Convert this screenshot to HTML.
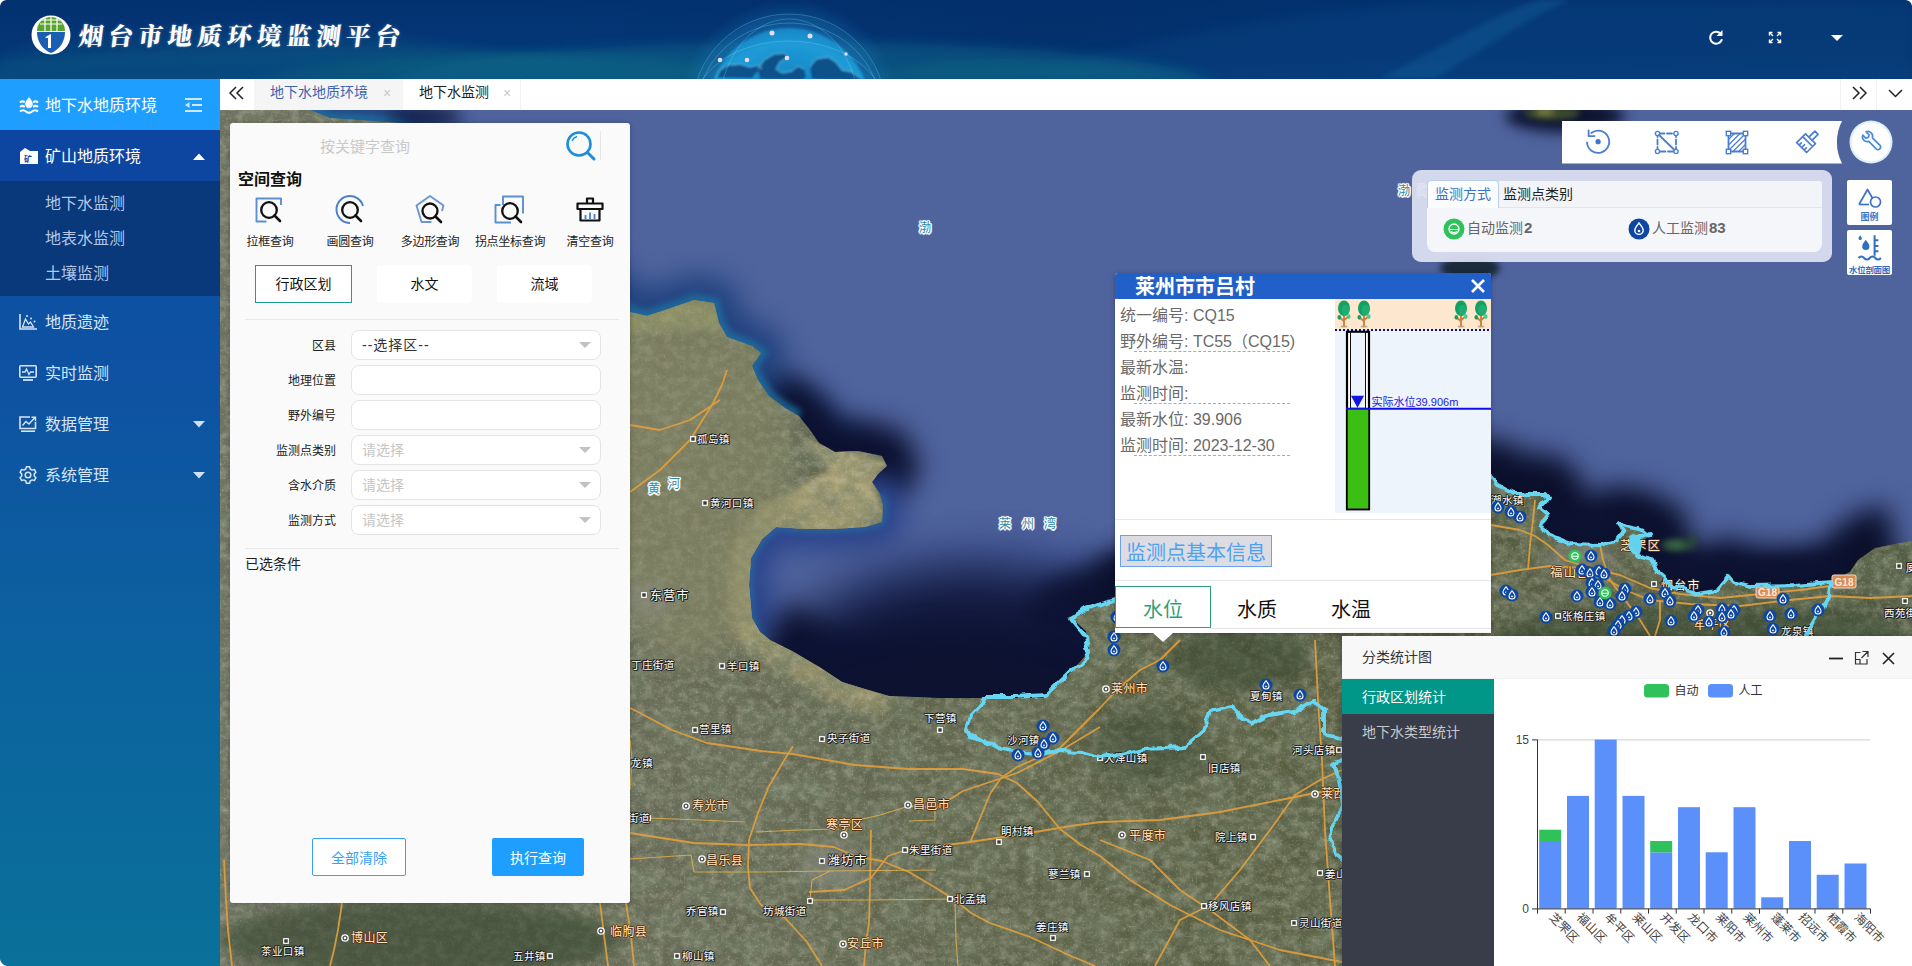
<!DOCTYPE html>
<html lang="zh-CN">
<head>
<meta charset="utf-8">
<title>烟台市地质环境监测平台</title>
<style>
*{box-sizing:border-box;margin:0;padding:0}
html,body{width:1912px;height:966px;overflow:hidden;background:#0a5a9c;}
body{font-family:"Liberation Sans","Noto Sans CJK SC",sans-serif;font-size:14px;color:#333;position:relative}
.abs{position:absolute}
#header{position:absolute;left:0;top:0;width:1912px;height:79px;overflow:hidden;background:#04377a}
#header svg{position:absolute;left:0;top:0}
#title{position:absolute;left:79px;top:9px;font-family:"Noto Serif CJK SC","Liberation Serif",serif;font-weight:900;font-size:24.500px;letter-spacing:5.200px;color:#fff;text-shadow:0 0 3px rgba(255,255,255,.3);white-space:nowrap;line-height:52px;transform:skewX(-7deg);transform-origin:0 50%}
#side{position:absolute;left:0;top:79px;width:220px;height:887px;background:linear-gradient(180deg,#0d4ea3 0%,#0e52a2 35%,#0c629f 65%,#0a7199 100%)}
.mi{position:absolute;left:0;width:220px;color:#e6eefb;font-size:16px;white-space:nowrap}
.mi span{position:absolute;left:45px;top:1px}
.mi svg{position:absolute}
#tabs{position:absolute;left:220px;top:79px;width:1692px;height:31px;background:#fff}
#tabs .t{position:absolute;top:0;height:31px;line-height:26px;font-size:14px;white-space:nowrap}
#map{position:absolute;left:220px;top:110px;width:1692px;height:856px;overflow:hidden;background:#4f639d}
#panel{position:absolute;left:230px;top:123px;width:400px;height:780px;background:#fafafa;border-radius:3px;box-shadow:0 0 4px rgba(0,0,0,.25)}
.lbl{position:absolute;font-size:12px;margin-top:1px;color:#222;white-space:nowrap;text-align:right}
.inp{position:absolute;left:121px;width:250px;height:30px;border:1px solid #e4e4e4;border-radius:8px;background:#fff;font-size:14px;line-height:28px;padding-left:10px;color:#c6c6c6;white-space:nowrap}
.inp i{position:absolute;right:9px;top:11px;width:0;height:0;border:6px solid transparent;border-top:6px solid #c2c2c2;border-bottom:0}
.ic{position:absolute;font-size:12px;color:#222;text-align:center;white-space:nowrap;letter-spacing:-0.3px}
.cl{position:absolute;color:#fff;font-size:10.5px;white-space:nowrap;text-shadow:-1px 0 #222,1px 0 #222,0 -1px #222,0 1px #222,1px 1px #222,-1px -1px #222;letter-spacing:.4px;line-height:14px}
.cl.o{color:#fde6c8;text-shadow:-1px 0 #5e3008,1px 0 #5e3008,0 -1px #5e3008,0 1px #5e3008;font-size:12px}
.cl.w{color:#2f8aa6;text-shadow:-1.500px 0 #fff,1.500px 0 #fff,0 -1.500px #fff,0 1.500px #fff,1px 1px #fff,-1px -1px #fff,1px -1px #fff,-1px 1px #fff,0 0 3px #fff;font-size:12px;letter-spacing:0}
</style>
</head>
<body>
<div id="header">
<svg width="1912" height="79" viewBox="0 0 1912 79">
<defs>
<linearGradient id="hg" x1="0" x2="1" y1="0" y2="0"><stop offset="0" stop-color="#043576"/><stop offset=".3" stop-color="#043676"/><stop offset=".55" stop-color="#03316c"/><stop offset=".75" stop-color="#033572"/><stop offset="1" stop-color="#033670"/></linearGradient>
<radialGradient id="gl" cx=".5" cy=".62" r=".62"><stop offset="0" stop-color="#1684c6"/><stop offset=".6" stop-color="#1a94d4"/><stop offset=".85" stop-color="#22a8e4"/><stop offset="1" stop-color="#1a90d0"/></radialGradient><linearGradient id="hv" x1="0" x2="0" y1="0" y2="1"><stop offset="0" stop-color="#022c68" stop-opacity=".4"/><stop offset=".5" stop-color="#022c68" stop-opacity="0"/><stop offset="1" stop-color="#0a4a8a" stop-opacity=".35"/></linearGradient>
<radialGradient id="gh" cx=".5" cy=".5" r=".5"><stop offset=".7" stop-color="#1a86c8" stop-opacity=".45"/><stop offset="1" stop-color="#1a86c8" stop-opacity="0"/></radialGradient><filter id="b1"><feGaussianBlur stdDeviation="1"/></filter><filter id="b05"><feGaussianBlur stdDeviation=".5"/></filter><filter id="b6"><feGaussianBlur stdDeviation="6"/></filter>
<filter id="b3"><feGaussianBlur stdDeviation="2.5"/></filter>
</defs>
<rect width="1912" height="79" fill="url(#hg)"/>
<rect width="1912" height="79" fill="url(#hv)"/>
<ellipse cx="330" cy="88" rx="420" ry="42" fill="#0c6688" opacity=".32" filter="url(#b6)"/>
<path d="M250 78 C400 52 560 50 700 62 C740 66 770 72 800 78Z" fill="#128078" opacity=".3" filter="url(#b6)"/>
<path d="M0 52 C150 20 300 22 420 40 C500 52 560 62 640 66 C500 70 300 60 0 70Z" fill="#157a90" opacity=".12" filter="url(#b6)"/>
<path d="M1380 78 C1440 50 1480 20 1540 0 L1570 0 C1515 25 1475 55 1436 78Z" fill="#1a7ab0" opacity=".3" filter="url(#b3)"/>
<path d="M1020 79 C1100 50 1200 30 1300 15 C1400 2 1500 0 1560 0 L1912 0 L1912 79Z" fill="#0a4a8c" opacity=".28" filter="url(#b6)"/><path d="M860 79 C920 58 1040 52 1200 79Z" fill="#128078" opacity=".4" filter="url(#b6)"/>
<ellipse cx="800" cy="90" rx="420" ry="48" fill="#0d6088" opacity=".6" filter="url(#b6)"/><circle cx="789" cy="112" r="112" fill="url(#gh)"/>
<g filter="url(#b1)" opacity=".82">
<circle cx="789" cy="111" r="97" fill="#1a78b8" opacity=".22"/>
<circle cx="789" cy="109" r="81" fill="url(#gl)"/>
<path d="M716 78 l4 -8 l8 -5 l12 -1 l10 3 l8 -2 l4 4 l-6 4 l-4 5z M760 79 l-2 -10 l6 -9 l10 -6 l10 -1 l4 4 l-8 5 l-4 7 l6 4 l10 -2 l6 -5 l6 3 l2 8 l-4 3z M812 79 l-2 -12 l6 -8 l12 -2 l8 5 l6 8 l10 2 l8 6 l2 3z" fill="#0a4078" opacity=".85"/>
<path d="M716 78 l4 -8 l8 -5 l12 -1 l10 3 l8 -2 l4 4 M758 69 l6 -9 l10 -6 l10 -1 l4 4 l-8 5 l-4 7 l6 4 l10 -2 l6 -5 l6 3 M810 67 l6 -8 l12 -2 l8 5 l6 8 l10 2 l8 6" fill="none" stroke="#7fe8ff" stroke-width=".9" opacity=".8"/>
</g>
<g fill="none" stroke="#8fe6ff" stroke-opacity=".32" stroke-width=".8">
<circle cx="789" cy="111" r="97"/><ellipse cx="789" cy="111" rx="92" ry="88"/><ellipse cx="789" cy="111" rx="97" ry="70"/><ellipse cx="789" cy="111" rx="70" ry="92"/>
</g>
<g fill="#eadcff" filter="url(#b05)"><circle cx="772" cy="33" r="2.500"/><circle cx="810" cy="36" r="2.500"/><circle cx="720" cy="60" r="2.300"/><circle cx="747" cy="60" r="2.300"/><circle cx="787" cy="58" r="2.300"/><circle cx="846" cy="54" r="1.700"/></g>
<!-- logo -->
<circle cx="51" cy="35" r="19.5" fill="#fff"/>
<path d="M37 31 a14 14 0 0 1 28 0z" fill="#5aa52e"/>
<path d="M37 32 h28 c0 10 -6 18 -14 21 c-8 -3 -14 -11 -14 -21z" fill="#1b5fb4"/>
<path d="M40 24 h22 M42 20 h18 M45 17 v14 M51 16 v15 M57 17 v14" stroke="#fff" stroke-width="1.2" fill="none"/>
<path d="M47 36 l4 -2 v14 h-3 v-10 h-3z" fill="#fff"/>
<!-- right icons -->
<g fill="none" stroke="#fff" stroke-width="2" stroke-linecap="round"><path d="M1720.5 33.5 a6 6 0 1 0 1.2 6.5"/></g>
<path d="M1722.5 30 v6 h-6z" fill="#fff"/>
<g stroke="#fff" stroke-width="1.4" fill="none"><path d="M1769.5 32.5 l3.5 3.5 M1780.500 32.5 l-3.500 3.500 M1769.500 42.500 l3.500 -3.500 M1780.500 42.500 l-3.500 -3.500"/><path d="M1769.500 35.500 v-3 h3 M1777.500 32.500 h3 v3 M1769.500 39.500 v3 h3 M1777.500 42.500 h3 v-3"/></g>
<path d="M1831 35 h12 l-6 6z" fill="#fff"/>
</svg>
<div id="title">烟台市地质环境监测平台</div>
</div>
<div id="side">
<div class="abs" style="left:0;top:0;width:220px;height:51px;background:#1e9fff"></div>
<div class="abs" style="left:0;top:51px;width:220px;height:51px;background:#0d46a0"></div>
<div class="abs" style="left:0;top:102px;width:220px;height:115px;background:#09387b"></div>
<div class="mi" style="top:0;height:51px;line-height:51px;color:#fff"><svg width="20" height="18" viewBox="0 0 20 18" style="left:19px;top:17px"><path d="M1 6.500 q2.500 -2.200 5 0 M14 6.500 q2.500 -2.200 5 0 M1 11 q2.500 -2.200 5 0 M14 11 q2.500 -2.200 5 0 M1 15.500 q3 -2.500 6 0 t6 0 t6 0" stroke="#fff" stroke-width="2" fill="none"/><path d="M10 .5 c2.300 3.200 4.200 5.200 4.200 7.700 a4.200 4.200 0 0 1 -8.400 0 c0 -2.500 1.900 -4.500 4.200 -7.700z" fill="#fff" stroke="#1e9fff" stroke-width=".8"/></svg><span>地下水地质环境</span><svg width="17" height="14" viewBox="0 0 17 14" style="left:185px;top:19px"><path d="M0 1 h17 M7 7 h10 M0 13 h17" stroke="#cfe6ff" stroke-width="2"/><path d="M4.500 4 v6 l-4.500 -3z" fill="#cfe6ff"/></svg></div>
<div class="mi" style="top:51px;height:51px;line-height:51px;color:#fff"><svg width="20" height="18" viewBox="0 0 20 18" style="left:19px;top:17px"><path d="M1 5 l5 -4 l5 3 h8 v13 h-18z" fill="#fff"/><text x="5" y="14.500" font-size="8" font-weight="700" fill="#0d46a0" font-family="Liberation Sans,Noto Sans CJK SC,sans-serif">矿</text></svg><span>矿山地质环境</span><svg width="12" height="7" viewBox="0 0 12 7" style="left:193px;top:23px"><path d="M0 7 l6 -6.500 l6 6.500z" fill="#fff"/></svg></div>
<div class="mi" style="top:106px;height:36px;line-height:36px;color:#b3c7e8"><span>地下水监测</span></div>
<div class="mi" style="top:141px;height:36px;line-height:36px;color:#b3c7e8"><span>地表水监测</span></div>
<div class="mi" style="top:176px;height:36px;line-height:36px;color:#b3c7e8"><span>土壤监测</span></div>
<div class="mi" style="top:217px;height:51px;line-height:51px;color:#d6e4f7"><svg width="18" height="16" viewBox="0 0 18 16" style="left:19px;top:18px"><path d="M1 0 v15 h17" stroke="#d6e4f7" stroke-width="1.600" fill="none"/><path d="M3.500 13 l3 -8 l3 5 l2 -2 l3 5z" stroke="#d6e4f7" stroke-width="1.300" fill="none"/><circle cx="12" cy="4.500" r="1" fill="#d6e4f7"/><circle cx="15.500" cy="7.500" r="1" fill="#d6e4f7"/><circle cx="8" cy="2" r="1" fill="#d6e4f7"/></svg><span>地质遗迹</span></div>
<div class="mi" style="top:268px;height:51px;line-height:51px;color:#d6e4f7"><svg width="18" height="16" viewBox="0 0 18 16" style="left:19px;top:18px"><rect x=".800" y=".800" width="16.400" height="11.400" rx="1" stroke="#d6e4f7" stroke-width="1.600" fill="none"/><path d="M3 7 h3 l1.500 -3 l2.500 5.500 l1.500 -2.500 h3.500" stroke="#d6e4f7" stroke-width="1.300" fill="none"/><path d="M4 15 h10" stroke="#d6e4f7" stroke-width="1.800"/></svg><span>实时监测</span></div>
<div class="mi" style="top:319px;height:51px;line-height:51px;color:#d6e4f7"><svg width="18" height="16" viewBox="0 0 18 16" style="left:19px;top:18px"><path d="M11 1 h-10 v11.500 h15.500 v-6.500" stroke="#d6e4f7" stroke-width="1.600" fill="none"/><path d="M3.500 9.500 l3.500 -4 l3 2.500 l6 -6.500 M12.500 1.200 h4 v4" stroke="#d6e4f7" stroke-width="1.400" fill="none"/><path d="M2 15.200 h14" stroke="#d6e4f7" stroke-width="1.600"/></svg><span>数据管理</span><svg width="12" height="7" viewBox="0 0 12 7" style="left:193px;top:23px"><path d="M0 0 l6 6.500 l6 -6.500z" fill="#cfe0f5"/></svg></div>
<div class="mi" style="top:370px;height:51px;line-height:51px;color:#d6e4f7"><svg width="18" height="18" viewBox="0 0 18 18" style="left:19px;top:17px"><path d="M6.81 2.99 L7.40 0.75 L10.60 0.75 L11.19 2.99 L13.11 4.10 L15.34 3.49 L16.94 6.27 L15.30 7.89 L15.30 10.11 L16.94 11.73 L15.34 14.51 L13.11 13.90 L11.19 15.01 L10.60 17.25 L7.40 17.25 L6.81 15.01 L4.89 13.90 L2.66 14.51 L1.06 11.73 L2.70 10.11 L2.70 7.89 L1.06 6.27 L2.66 3.49 L4.89 4.10Z" stroke="#d6e4f7" stroke-width="1.500" fill="none" stroke-linejoin="round"/><circle cx="9" cy="9" r="2.800" stroke="#d6e4f7" stroke-width="1.500" fill="none"/></svg><span>系统管理</span><svg width="12" height="7" viewBox="0 0 12 7" style="left:193px;top:23px"><path d="M0 0 l6 6.500 l6 -6.500z" fill="#cfe0f5"/></svg></div>
</div>
<div id="tabs">
<svg class="abs" style="left:9px;top:7px" width="16" height="14" viewBox="0 0 16 14"><path d="M7 1 l-6 6 l6 6 M14 1 l-6 6 l6 6" stroke="#222" stroke-width="1.500" fill="none"/></svg>
<div class="t" style="left:34px;width:149px;background:#f5f5f5;color:#3d64b3;padding-left:16px">地下水地质环境<b style="position:absolute;left:129px;top:1px;font-weight:400;color:#c8c8c8;font-size:14px">×</b></div>
<div class="t" style="left:183px;width:118px;color:#222;padding-left:16px;border-right:1px solid #f4f4f4">地下水监测<b style="position:absolute;left:100px;top:1px;font-weight:400;color:#c8c8c8;font-size:14px">×</b></div>
<div class="abs" style="left:1620px;top:0;width:1px;height:32px;background:#f2f2f2"></div>
<div class="abs" style="left:1656px;top:0;width:1px;height:32px;background:#f2f2f2"></div>
<svg class="abs" style="left:1631px;top:7px" width="16" height="14" viewBox="0 0 16 14"><path d="M2 1 l6 6 l-6 6 M9 1 l6 6 l-6 6" stroke="#222" stroke-width="1.500" fill="none"/></svg>
<svg class="abs" style="left:1668px;top:10px" width="15" height="9" viewBox="0 0 15 9"><path d="M1 1 l6.500 6.500 l6.500 -6.500" stroke="#222" stroke-width="1.500" fill="none"/></svg>
</div>
<div id="map">
<svg width="1692" height="856" viewBox="220 110 1692 856" style="position:absolute;left:0;top:0">
<defs>
<filter id="mb18" color-interpolation-filters="sRGB" filterUnits="userSpaceOnUse" x="120" y="10" width="1892" height="1056"><feGaussianBlur stdDeviation="13"/></filter>
<filter id="mb28" color-interpolation-filters="sRGB" filterUnits="userSpaceOnUse" x="120" y="10" width="1892" height="1056"><feGaussianBlur stdDeviation="26"/></filter>
<filter id="mb8" color-interpolation-filters="sRGB" filterUnits="userSpaceOnUse" x="120" y="10" width="1892" height="1056"><feGaussianBlur stdDeviation="7"/></filter>
<filter id="mb3" color-interpolation-filters="sRGB" filterUnits="userSpaceOnUse" x="120" y="10" width="1892" height="1056"><feGaussianBlur stdDeviation="3"/></filter>
<filter id="tx1" x="0" y="0" width="100%" height="100%"><feTurbulence type="fractalNoise" baseFrequency="0.035 0.045" numOctaves="5" seed="7"/><feColorMatrix type="matrix" values="0 0 0 0 0.17  0 0 0 0 0.21  0 0 0 0 0.13  1.5 0 0 0 -0.5"/></filter>
<filter id="tx2" x="0" y="0" width="100%" height="100%"><feTurbulence type="fractalNoise" baseFrequency="0.11 0.13" numOctaves="4" seed="21"/><feColorMatrix type="matrix" values="0 0 0 0 0.66  0 0 0 0 0.63  0 0 0 0 0.52  0 1.5 0 0 -0.6"/></filter>
<filter id="tx3" x="0" y="0" width="100%" height="100%"><feTurbulence type="fractalNoise" baseFrequency="0.5" numOctaves="2" seed="5"/><feColorMatrix type="matrix" values="0 0 0 0 0.85  0 0 0 0 0.84  0 0 0 0 0.74  0 0 3 0 -1.75"/></filter>
<clipPath id="landclip"><path d="M220 110 L310 110 L330 118 L400 123 L500 200 L600 280 L630 312 L647 316 L677 306 L694 300 L714 303 L719 323 L727 337 L752 346 L761 353 L752 366 L758 380 L769 396 L785 408 L799 416 L810 430 L819 443 L835 452 L858 451 L882 456 L887 466 L878 474 L872 482 L880 494 L883 505 L882 522 L865 527 L835 529 L805 529 L776 527 L762 539 L751 558 L749 585 L752 618 L760 632 L770 640 L792 651 L821 668 L842 682 L865 689 L889 696 L940 698 L978 698 L1043 698 L1068 675 L1089 652 L1086 631 L1075 621 L1067 618 L1085 610 L1110 602 L1150 585 L1200 560 L1300 520 L1400 490 L1491 478 L1514 493 L1543 493 L1548 499 L1540 508 L1548 515 L1541 524 L1548 535 L1570 544 L1600 545 L1616 541 L1622 532 L1618 525 L1630 526 L1640 530 L1652 536 L1640 541 L1632 548 L1638 555 L1652 560 L1658 573 L1672 585 L1697 594 L1715 591 L1722 583 L1728 577 L1733 582 L1751 586 L1796 585 L1830 582 L1850 572 L1858 560 L1875 548 L1895 544 L1912 541 L1912 966 L220 966Z"/></clipPath>
<linearGradient id="lg" x1="0" x2="1" y1="0" y2="0"><stop offset="0" stop-color="#6e7060"/><stop offset=".3" stop-color="#666a55"/><stop offset=".5" stop-color="#5c6247"/><stop offset=".7" stop-color="#575d40"/><stop offset="1" stop-color="#535c44"/></linearGradient>
<g id="mk"><circle r="6.5" fill="#0d47a1"/><path d="M0 -4.2 c1.6 2.2 3 3.500 3 5.200 a3 3 0 0 1 -6 0 c0 -1.700 1.400 -3 3 -5.200z" fill="none" stroke="#fff" stroke-width="1.100"/><circle cy="1.300" r=".9" fill="#fff"/></g>
<g id="gmk"><circle r="6.500" fill="#2fc25b"/><circle r="3.200" fill="none" stroke="#fff" stroke-width="1.100"/><path d="M-2.600 .3 h5.200" stroke="#fff" stroke-width="1"/></g>
</defs>
<rect x="220" y="110" width="1692" height="856" fill="#4f639d"/>
<ellipse cx="1000" cy="600" rx="160" ry="60" fill="#4a5fa0" filter="url(#mb18)"/>
<path d="M310 110 L330 118 L400 123 L500 200 L600 280 L630 312 L647 316 L677 306 L694 300 L714 303 L719 323 L727 337 L752 346 L761 353 L752 366 L758 380 L769 396 L785 408 L799 416 L810 430 L819 443 L835 452 L858 451" fill="none" stroke="#1d3f7c" stroke-width="50" stroke-linejoin="round" filter="url(#mb18)" opacity=".9"/>
<path d="M769 396 L785 408 L799 416 L810 430 L819 443 L835 452 L858 451 L882 456 L887 466 L878 474 L872 482" fill="none" stroke="#0c1130" stroke-width="62" stroke-linejoin="round" filter="url(#mb18)"/>
<path d="M872 482 L880 494 L883 505 L882 522 L865 527 L835 529 L805 529 L776 527 L762 539 L751 558 L749 585 L752 618 L760 632 L770 640" fill="none" stroke="#27408a" stroke-width="40" stroke-linejoin="round" filter="url(#mb18)" opacity=".9"/>
<path d="M880 494 L883 505 L882 522 L865 527 L835 529 L805 529 L776 527 L762 539 L751 558 L749 585 L752 618 L760 632 L770 640" fill="none" stroke="#2a6aa0" stroke-width="9" stroke-linejoin="round" filter="url(#mb3)" opacity=".7"/>
<path d="M770 640 L792 651 L821 668 L842 682 L865 689 L889 696 L940 698 L978 698 L1043 698 L1068 675 L1089 652 L1086 631 L1075 621 L1067 618 L1085 610 L1110 602 L1150 585" fill="none" stroke="#0b102c" stroke-width="80" stroke-linejoin="round" filter="url(#mb18)"/>
<path d="M1110 602 L1150 585 L1200 560 L1300 520 L1400 490 L1491 478 L1514 493 L1543 493 L1548 499 L1540 508 L1548 515 L1541 524 L1548 535 L1570 544 L1600 545 L1616 541 L1622 532 L1618 525 L1630 526 L1640 530 L1652 536 L1640 541 L1632 548 L1638 555 L1652 560 L1658 573 L1672 585 L1697 594 L1715 591 L1722 583 L1728 577 L1733 582 L1751 586 L1796 585 L1830 582 L1850 572 L1858 560 L1875 548 L1895 544" fill="none" stroke="#0b102c" stroke-width="78" stroke-linejoin="round" filter="url(#mb18)"/>
<path d="M790 650 L842 682 L940 698 L1043 698 L1089 652 L1075 621 L1040 650 L960 668 L880 662Z" fill="#0c1232" filter="url(#mb8)" opacity=".85"/>
<path d="M1545 500 L1548 535 L1600 545 L1622 530 L1652 536 L1660 573 L1700 592 L1728 576 L1800 583 L1850 570 L1830 555 L1740 560 L1690 550 L1640 510 L1580 515Z" fill="#0d1333" filter="url(#mb8)" opacity=".8"/>
<ellipse cx="975" cy="690" rx="200" ry="125" fill="#0e1436" filter="url(#mb28)" opacity=".95"/><ellipse cx="950" cy="700" rx="170" ry="70" fill="#0c1230" filter="url(#mb18)" opacity=".9"/>
<path d="M310 110 L330 118 L400 123 L500 200 L600 280 L630 312 L647 316 L677 306 L694 300 L714 303 L719 323 L727 337 L752 346 L761 353 L752 366 L758 380 L769 396 L785 408 L799 416" fill="none" stroke="#1e6fa0" stroke-width="12" filter="url(#mb3)" opacity=".8"/>
<ellipse cx="425" cy="116" rx="38" ry="9" fill="#10183c" filter="url(#mb8)" opacity=".8"/>
<ellipse cx="1565" cy="116" rx="60" ry="16" fill="#0c1230" filter="url(#mb8)"/>
<ellipse cx="1552" cy="113" rx="28" ry="7" fill="#3c4a2c" filter="url(#mb3)"/><ellipse cx="1545" cy="112" rx="10" ry="3" fill="#8a8a4a" filter="url(#mb3)"/>
<ellipse cx="1470" cy="268" rx="30" ry="12" fill="#1a2a3a" filter="url(#mb3)"/>
<ellipse cx="1678" cy="545" rx="18" ry="6.500" fill="#2a4a3a" filter="url(#mb3)"/><circle cx="1693" cy="539" r="4" fill="#2a4a3a" filter="url(#mb3)"/><ellipse cx="1676" cy="545" rx="9" ry="3" fill="#3f6a4a" filter="url(#mb3)"/>
<g clip-path="url(#landclip)">
<rect x="220" y="110" width="1692" height="856" fill="url(#lg)"/>
<path d="M800 440 L858 452 L886 462 L874 482 L883 520 L805 529 L776 527 L752 560 L749 620 L770 645 L740 640 L735 560 L760 510 L790 490 L830 470Z" fill="#a59d72" filter="url(#mb3)"/>
<path d="M630 312 L694 300 L716 305 L722 330 L680 330 L630 335Z" fill="#8f9462" filter="url(#mb3)"/>
<path d="M865 527 L835 529 L805 529 L776 527 L762 539 L751 558 L749 585 L752 618 L760 632 L770 640 L792 651 L821 668 L842 682 L865 689 L889 696" fill="none" stroke="#9c966c" stroke-width="44" stroke-linejoin="round" filter="url(#mb8)" opacity=".85"/>
<rect x="220" y="110" width="1692" height="856" filter="url(#tx1)"/>
<rect x="220" y="110" width="1692" height="856" filter="url(#tx2)" opacity=".45"/>
<rect x="220" y="110" width="1692" height="856" filter="url(#tx3)" opacity=".3"/>
<ellipse cx="690" cy="470" rx="100" ry="190" fill="#8c8c68" filter="url(#mb18)" opacity=".5"/>
<ellipse cx="1150" cy="745" rx="60" ry="35" fill="#2f3f2c" filter="url(#mb18)" opacity=".4"/>
<ellipse cx="1240" cy="660" rx="70" ry="30" fill="#34452f" filter="url(#mb8)" opacity=".5"/>
<ellipse cx="1700" cy="630" rx="200" ry="25" fill="#33452f" filter="url(#mb8)" opacity=".5"/>
<ellipse cx="420" cy="940" rx="200" ry="40" fill="#34452e" filter="url(#mb8)" opacity=".6"/>
<ellipse cx="835" cy="865" rx="35" ry="22" fill="#8a8c84" filter="url(#mb8)" opacity=".55"/>
<ellipse cx="1580" cy="560" rx="40" ry="18" fill="#8a8c84" filter="url(#mb8)" opacity=".5"/>
<ellipse cx="650" cy="600" rx="25" ry="18" fill="#8a8c84" filter="url(#mb8)" opacity=".5"/>
</g>
<g fill="none" stroke="#e3a03c" stroke-width="1.800" stroke-linejoin="round" opacity=".9">
<path d="M630 492 L660 470 L690 440 L712 405 L722 385 L727 370"/>
<path d="M630 425 L660 430 L690 420 L720 400"/>
<path d="M630 708 L640 713 L672 730 L707 743 L761 751 L793 754 L855 765 L909 769 L963 769 L998 774 L1017 783 L1038 802 L1060 829 L1081 845 L1100 856 L1130 880 L1170 905 L1220 930 L1280 950 L1342 962"/>
<path d="M793 746 L785 759 L769 786 L758 813 L749 840 L748 867 L750 888 L761 905 L785 918 L807 942 L822 966"/>
<path d="M630 833 L694 843 L748 845 L801 844 L834 847 L855 856 L882 861 L909 872 L936 888 L955 900 L971 913 L990 923 L1030 937 L1071 956 L1095 966"/>
<path d="M871 830 L870 888 L869 923 L866 942 L864 966"/>
<path d="M809 892 L844 890 L871 878 L888 856 L909 849 L963 843 L1017 835 L1071 826 L1100 822 L1160 820 L1220 812 L1280 800 L1320 792 L1342 790"/>
<path d="M1117 690 L1100 708 L1060 748 L1017 767 L1001 778 L990 794 L979 821 L970 843"/>
<path d="M1100 727 L1060 751 L1017 773 L963 791 L936 808 L909 806"/>
<path d="M1100 840 L1150 860 L1180 890 L1210 910 L1250 940 L1270 966"/>
<path d="M1155 966 L1180 920 L1210 905 L1240 870 L1270 830 L1295 795 L1320 780 L1342 770"/>
<path d="M1117 690 L1140 670 L1160 660 L1180 640"/>
<path d="M1315 640 L1318 700 L1322 760 L1325 830 L1330 900 L1335 966"/>
<path d="M232 966 L228 930 L226 900 L224 860"/>
<path d="M342 903 L338 930 L334 950 L330 966"/>
<path d="M600 903 L604 935 L608 966"/>
<path d="M626 903 L631 935 L634 966"/>
<path d="M1491 525 L1520 530 L1535 536 L1548 545 L1565 560 L1590 568 L1620 575 L1650 588 L1680 594 L1720 598 L1760 594 L1800 590 L1830 586"/>
<path d="M1491 575 L1520 570 L1550 566 L1580 568 L1600 575 L1625 590 L1650 600 L1690 604 L1740 606 L1790 600 L1830 596 L1870 598 L1912 596"/>
<path d="M1535 500 L1533 520 L1530 545 L1528 570"/>
<path d="M1600 545 L1603 560 L1610 580 L1625 600 L1640 620 L1650 636"/>
<path d="M1660 600 L1660 620 L1655 636"/>
</g>
<g fill="none" stroke="#e0b24a" stroke-width="1.100" stroke-linejoin="round" opacity=".85">
<path d="M810 900 L870 900 L950 899"/>
<path d="M955 900 L956 940 L958 966"/>
<path d="M694 872 L760 872 L830 871 L936 870"/>
<path d="M756 832 L800 830 L839 829"/>
<path d="M630 859 L691 855 L694 872"/>
<path d="M648 818 L700 820 L745 822"/>
<path d="M844 835 L850 822 L880 815 L909 806"/>
<path d="M909 806 L935 806 L935 820 L909 821"/>
<path d="M810 900 L812 880 L830 871"/>
<path d="M630 790 L632 760 L630 740"/>
</g>
<rect x="1832" y="575" width="24" height="13" rx="2" fill="#d98a55" stroke="#f3d9c0" stroke-width="1"/>
<text x="1844" y="585.5" font-size="10" font-weight="700" fill="#fbe9d8" text-anchor="middle" font-family="Liberation Sans,sans-serif">G18</text>
<rect x="1756" y="587" width="23" height="11" rx="2" fill="#d98a55" stroke="#f3d9c0" stroke-width="1"/>
<text x="1767.5" y="595.5" font-size="10" font-weight="700" fill="#fbe9d8" text-anchor="middle" font-family="Liberation Sans,sans-serif">G18</text>
<rect x="690.7" y="436.7" width="4.600" height="4.600" fill="#3a3a3a" stroke="#fff" stroke-width="1.200"/>
<rect x="702.7" y="500.7" width="4.600" height="4.600" fill="#3a3a3a" stroke="#fff" stroke-width="1.200"/>
<rect x="641.7" y="592.7" width="4.600" height="4.600" fill="#3a3a3a" stroke="#fff" stroke-width="1.200"/>
<rect x="719.7" y="663.7" width="4.600" height="4.600" fill="#3a3a3a" stroke="#fff" stroke-width="1.200"/>
<rect x="692.7" y="727.7" width="4.600" height="4.600" fill="#3a3a3a" stroke="#fff" stroke-width="1.200"/>
<rect x="819.7" y="736.7" width="4.600" height="4.600" fill="#3a3a3a" stroke="#fff" stroke-width="1.200"/>
<rect x="937.7" y="727.7" width="4.600" height="4.600" fill="#3a3a3a" stroke="#fff" stroke-width="1.200"/>
<circle cx="686" cy="806" r="3.200" fill="#555" stroke="#fff" stroke-width="1.300"/><circle cx="686" cy="806" r="1.200" fill="#fff"/>
<circle cx="908" cy="805" r="3.200" fill="#555" stroke="#fff" stroke-width="1.300"/><circle cx="908" cy="805" r="1.200" fill="#fff"/>
<circle cx="844" cy="835" r="3.200" fill="#555" stroke="#fff" stroke-width="1.300"/><circle cx="844" cy="835" r="1.200" fill="#fff"/>
<rect x="819.7" y="858.7" width="4.600" height="4.600" fill="#3a3a3a" stroke="#fff" stroke-width="1.200"/>
<circle cx="702" cy="859" r="3.200" fill="#555" stroke="#fff" stroke-width="1.300"/><circle cx="702" cy="859" r="1.200" fill="#fff"/>
<rect x="902.7" y="847.7" width="4.600" height="4.600" fill="#3a3a3a" stroke="#fff" stroke-width="1.200"/>
<rect x="996.7" y="839.7" width="4.600" height="4.600" fill="#3a3a3a" stroke="#fff" stroke-width="1.200"/>
<rect x="1084.7" y="871.7" width="4.600" height="4.600" fill="#3a3a3a" stroke="#fff" stroke-width="1.200"/>
<rect x="947.7" y="896.7" width="4.600" height="4.600" fill="#3a3a3a" stroke="#fff" stroke-width="1.200"/>
<rect x="1050.7" y="935.7" width="4.600" height="4.600" fill="#3a3a3a" stroke="#fff" stroke-width="1.200"/>
<rect x="720.7" y="909.7" width="4.600" height="4.600" fill="#3a3a3a" stroke="#fff" stroke-width="1.200"/>
<rect x="807.7" y="898.7" width="4.600" height="4.600" fill="#3a3a3a" stroke="#fff" stroke-width="1.200"/>
<circle cx="843" cy="944" r="3.200" fill="#555" stroke="#fff" stroke-width="1.300"/><circle cx="843" cy="944" r="1.200" fill="#fff"/>
<rect x="674.7" y="953.7" width="4.600" height="4.600" fill="#3a3a3a" stroke="#fff" stroke-width="1.200"/>
<rect x="645.7" y="815.7" width="4.600" height="4.600" fill="#3a3a3a" stroke="#fff" stroke-width="1.200"/>
<circle cx="1106" cy="689" r="3.200" fill="#555" stroke="#fff" stroke-width="1.300"/><circle cx="1106" cy="689" r="1.200" fill="#fff"/>
<rect x="1097.7" y="755.7" width="4.600" height="4.600" fill="#3a3a3a" stroke="#fff" stroke-width="1.200"/>
<rect x="1200.7" y="754.7" width="4.600" height="4.600" fill="#3a3a3a" stroke="#fff" stroke-width="1.200"/>
<rect x="1336.7" y="747.7" width="4.600" height="4.600" fill="#3a3a3a" stroke="#fff" stroke-width="1.200"/>
<circle cx="1315" cy="794" r="3.200" fill="#555" stroke="#fff" stroke-width="1.300"/><circle cx="1315" cy="794" r="1.200" fill="#fff"/>
<circle cx="1122" cy="835" r="3.200" fill="#555" stroke="#fff" stroke-width="1.300"/><circle cx="1122" cy="835" r="1.200" fill="#fff"/>
<rect x="1250.7" y="834.7" width="4.600" height="4.600" fill="#3a3a3a" stroke="#fff" stroke-width="1.200"/>
<rect x="1317.7" y="870.7" width="4.600" height="4.600" fill="#3a3a3a" stroke="#fff" stroke-width="1.200"/>
<rect x="1201.7" y="903.7" width="4.600" height="4.600" fill="#3a3a3a" stroke="#fff" stroke-width="1.200"/>
<rect x="1291.7" y="920.7" width="4.600" height="4.600" fill="#3a3a3a" stroke="#fff" stroke-width="1.200"/>
<rect x="1651.7" y="581.7" width="4.600" height="4.600" fill="#3a3a3a" stroke="#fff" stroke-width="1.200"/>
<rect x="1555.7" y="613.7" width="4.600" height="4.600" fill="#3a3a3a" stroke="#fff" stroke-width="1.200"/>
<circle cx="1710" cy="613" r="3.200" fill="#555" stroke="#fff" stroke-width="1.300"/><circle cx="1710" cy="613" r="1.200" fill="#fff"/>
<rect x="1902.7" y="598.7" width="4.600" height="4.600" fill="#3a3a3a" stroke="#fff" stroke-width="1.200"/>
<rect x="1896.7" y="563.7" width="4.600" height="4.600" fill="#3a3a3a" stroke="#fff" stroke-width="1.200"/>
<circle cx="345" cy="938" r="3.200" fill="#555" stroke="#fff" stroke-width="1.300"/><circle cx="345" cy="938" r="1.200" fill="#fff"/>
<circle cx="601" cy="931" r="3.200" fill="#555" stroke="#fff" stroke-width="1.300"/><circle cx="601" cy="931" r="1.200" fill="#fff"/>
<rect x="283.7" y="938.7" width="4.600" height="4.600" fill="#3a3a3a" stroke="#fff" stroke-width="1.200"/>
<rect x="547.7" y="953.7" width="4.600" height="4.600" fill="#3a3a3a" stroke="#fff" stroke-width="1.200"/>
</svg>
<div class="cl" style="left:477px;top:322px;">孤岛镇</div>
<div class="cl" style="left:490px;top:386px;">黄河口镇</div>
<div class="cl" style="left:430px;top:479px;font-size:12px;letter-spacing:1.2px;">东营市</div>
<div class="cl" style="left:411px;top:548px;">丁庄街道</div>
<div class="cl" style="left:507px;top:549px;">羊口镇</div>
<div class="cl" style="left:479px;top:612px;">营里镇</div>
<div class="cl" style="left:607px;top:621px;">央子街道</div>
<div class="cl" style="left:704px;top:601px;">下营镇</div>
<div class="cl" style="left:787px;top:623px;">沙河镇</div>
<div class="cl" style="left:411px;top:646px;">龙镇</div>
<div class="cl o" style="left:472px;top:689px;">寿光市</div>
<div class="cl o" style="left:693px;top:688px;">昌邑市</div>
<div class="cl o" style="left:606px;top:708px;">寒亭区</div>
<div class="cl" style="left:608px;top:744px;font-size:12px;letter-spacing:1.2px;">潍坊市</div>
<div class="cl o" style="left:486px;top:744px;">昌乐县</div>
<div class="cl" style="left:689px;top:733px;">朱里街道</div>
<div class="cl" style="left:781px;top:714px;">眀村镇</div>
<div class="cl" style="left:828px;top:757px;">蓼兰镇</div>
<div class="cl" style="left:734px;top:782px;">北孟镇</div>
<div class="cl" style="left:816px;top:810px;">姜庄镇</div>
<div class="cl" style="left:466px;top:794px;">乔官镇</div>
<div class="cl" style="left:543px;top:794px;">坊城街道</div>
<div class="cl o" style="left:627px;top:827px;">安丘市</div>
<div class="cl" style="left:462px;top:839px;">柳山镇</div>
<div class="cl" style="left:408px;top:701px;">街道</div>
<div class="cl o" style="left:891px;top:572px;">莱州市</div>
<div class="cl" style="left:1030px;top:579px;">夏甸镇</div>
<div class="cl" style="left:884px;top:641px;">大泽山镇</div>
<div class="cl" style="left:988px;top:651px;">旧店镇</div>
<div class="cl" style="left:1072px;top:633px;">河头店镇</div>
<div class="cl o" style="left:1101px;top:677px;">莱西</div>
<div class="cl o" style="left:909px;top:719px;">平度市</div>
<div class="cl" style="left:995px;top:720px;">院上镇</div>
<div class="cl" style="left:1105px;top:757px;">姜山</div>
<div class="cl" style="left:988px;top:789px;">移风店镇</div>
<div class="cl" style="left:1079px;top:806px;">灵山街道</div>
<div class="cl" style="left:1271px;top:383px;">潮水镇</div>
<div class="cl o" style="left:1400px;top:429px;font-size:12.5px;letter-spacing:1.2px;">芝罘区</div>
<div class="cl o" style="left:1330px;top:456px;font-size:12.5px;letter-spacing:1.2px;">福山区</div>
<div class="cl" style="left:1441px;top:469px;font-size:12px;letter-spacing:1.2px;">烟台市</div>
<div class="cl" style="left:1342px;top:499px;">张格庄镇</div>
<div class="cl o" style="left:1474px;top:508px;">牟平区</div>
<div class="cl" style="left:1561px;top:514px;">龙泉镇</div>
<div class="cl" style="left:1664px;top:496px;">西苑街</div>
<div class="cl" style="left:1686px;top:451px;font-size:12px;letter-spacing:1.2px;">威</div>
<div class="cl o" style="left:131px;top:821px;">博山区</div>
<div class="cl o" style="left:390px;top:815px;">临朐县</div>
<div class="cl" style="left:41px;top:834px;">茶业口镇</div>
<div class="cl" style="left:293px;top:839px;">五井镇</div>
<div class="cl w" style="left:428px;top:372px">黄</div>
<div class="cl w" style="left:448px;top:367px">河</div>
<div class="cl w" style="left:779px;top:407px">莱</div>
<div class="cl w" style="left:802px;top:407px">州</div>
<div class="cl w" style="left:824px;top:407px">湾</div>
<div class="cl w" style="left:699px;top:111px">渤</div>
<div class="cl w" style="left:1178px;top:74px">渤</div>
<div class="cl w" style="left:1197px;top:74px">海</div>
<svg width="1692" height="856" viewBox="220 110 1692 856" style="position:absolute;left:0;top:0">
<defs><filter id="wig" filterUnits="userSpaceOnUse" x="220" y="110" width="1692" height="856"><feTurbulence type="fractalNoise" baseFrequency="0.09" numOctaves="2" seed="11" result="n"/><feDisplacementMap in="SourceGraphic" in2="n" scale="7" xChannelSelector="R" yChannelSelector="G"/></filter></defs>
<g fill="none" stroke="#66d6f2" stroke-width="3.800" stroke-linejoin="round" stroke-linecap="round" filter="url(#wig)">
<path d="M1115 600 L1100 604 L1085 610 L1070 618 L1080 630 L1086 638 L1089 652 L1082 663 L1068 674 L1046 695 L1014 697 L985 697 L980 706 L969 718 L966 731 L985 742 L1000 749 L1018 752 L1037 754 L1060 751 L1082 752 L1100 757 L1121 754 L1143 749 L1186 747 L1204 731 L1211 710 L1232 706 L1250 724 L1268 715 L1300 710 L1315 701 L1324 710 L1324 735 L1342 738"/>
<path d="M1342 760 L1333 765 L1338 781 L1343 806 L1329 835 L1336 853 L1345 860"/>
<path d="M1486 470 L1491 478 L1497 485 L1514 493 L1543 493 L1548 499 L1540 508 L1548 515 L1541 524 L1548 535 L1570 544 L1600 545 L1616 541 L1624 531 L1618 524 L1638 529 L1652 535 L1638 537 L1631 543 L1632 550 L1638 556 L1652 560 L1658 573 L1672 585 L1697 594 L1715 591 L1722 583 L1728 576 L1733 582 L1751 586 L1796 585 L1830 582 L1829 596 L1814 621 L1805 636"/>
</g>
<path d="M1629 536 l4 -2 l6 2 l3 8 l-2 10 l-6 -3 l-4 -8z" fill="#62d2ee"/>
<use href="#mk" x="1498" y="507"/>
<use href="#mk" x="1511" y="512"/>
<use href="#mk" x="1520" y="517"/>
<use href="#mk" x="1591" y="556"/>
<use href="#mk" x="1582" y="570"/>
<use href="#mk" x="1590" y="573"/>
<use href="#mk" x="1599" y="571"/>
<use href="#mk" x="1604" y="574"/>
<use href="#mk" x="1592" y="583"/>
<use href="#mk" x="1598" y="585"/>
<use href="#mk" x="1592" y="592"/>
<use href="#mk" x="1625" y="589"/>
<use href="#mk" x="1622" y="596"/>
<use href="#mk" x="1577" y="596"/>
<use href="#mk" x="1600" y="602"/>
<use href="#mk" x="1610" y="604"/>
<use href="#mk" x="1506" y="591"/>
<use href="#mk" x="1512" y="595"/>
<use href="#mk" x="1546" y="617"/>
<use href="#mk" x="1636" y="612"/>
<use href="#mk" x="1629" y="616"/>
<use href="#mk" x="1622" y="620"/>
<use href="#mk" x="1618" y="625"/>
<use href="#mk" x="1614" y="631"/>
<use href="#mk" x="1650" y="599"/>
<use href="#mk" x="1665" y="593"/>
<use href="#mk" x="1670" y="601"/>
<use href="#mk" x="1671" y="621"/>
<use href="#mk" x="1698" y="610"/>
<use href="#mk" x="1694" y="616"/>
<use href="#mk" x="1709" y="622"/>
<use href="#mk" x="1722" y="609"/>
<use href="#mk" x="1722" y="617"/>
<use href="#mk" x="1734" y="610"/>
<use href="#mk" x="1731" y="614"/>
<use href="#mk" x="1724" y="632"/>
<use href="#mk" x="1770" y="616"/>
<use href="#mk" x="1773" y="629"/>
<use href="#mk" x="1783" y="599"/>
<use href="#mk" x="1791" y="614"/>
<use href="#mk" x="1818" y="610"/>
<use href="#mk" x="1043" y="726"/>
<use href="#mk" x="1053" y="738"/>
<use href="#mk" x="1044" y="744"/>
<use href="#mk" x="1038" y="753"/>
<use href="#mk" x="1018" y="755"/>
<use href="#mk" x="1114" y="637"/>
<use href="#mk" x="1114" y="650"/>
<use href="#mk" x="1163" y="666"/>
<use href="#mk" x="1266" y="685"/>
<use href="#mk" x="1300" y="695"/>
<use href="#mk" x="1117" y="617"/>
<use href="#gmk" x="1575" y="556"/>
<use href="#gmk" x="1605" y="593"/>
</svg>
</div>
<div id="panel">
<div class="abs" style="left:90px;top:15px;font-size:15px;color:#c9c9c9;white-space:nowrap;line-height:18px">按关键字查询</div>
<svg class="abs" style="left:334px;top:6px" width="38" height="34" viewBox="0 0 38 34"><circle cx="15" cy="15" r="11.500" fill="none" stroke="#1e8fd6" stroke-width="2.600"/><path d="M8 12 a8 8 0 0 1 5 -4.500" fill="none" stroke="#1e8fd6" stroke-width="1.400"/><path d="M23.500 23.500 l6.500 6.500" stroke="#1e8fd6" stroke-width="3" stroke-linecap="round"/><path d="M36.500 2 v29" stroke="#e6e6e6" stroke-width="1"/></svg>
<div class="abs" style="left:8px;top:47px;font-size:16px;font-weight:700;color:#111;line-height:20px;letter-spacing:0;white-space:nowrap">空间查询</div>
<!-- icons -->
<svg class="abs" style="left:24px;top:73px" width="32" height="30" viewBox="0 0 32 30"><path d="M27 9 v-6.500 h-24.500 v23 h10" fill="none" stroke="#5b8fd0" stroke-width="1.900" stroke-linejoin="round"/><circle cx="15" cy="14" r="7.800" fill="none" stroke="#111" stroke-width="2.300"/><path d="M20.500 19.500 l5.500 5.500" stroke="#111" stroke-width="2.600" stroke-linecap="round"/></svg>
<svg class="abs" style="left:104px;top:71px" width="32" height="32" viewBox="0 0 32 32"><path d="M16 29 a13.500 13.500 0 1 1 13 -17" fill="none" stroke="#4a7fc8" stroke-width="1.900"/><circle cx="16" cy="16" r="7.800" fill="none" stroke="#111" stroke-width="2.300"/><path d="M21.500 21.500 l5.500 5.500" stroke="#111" stroke-width="2.600" stroke-linecap="round"/></svg>
<svg class="abs" style="left:184px;top:71px" width="32" height="32" viewBox="0 0 32 32"><path d="M28 17 l1.500 -5.500 l-13.500 -9.500 l-13.500 9.500 l5 16.500 h10" fill="none" stroke="#6a96d6" stroke-width="1.900" stroke-linejoin="round"/><circle cx="16" cy="17" r="7.500" fill="none" stroke="#111" stroke-width="2.300"/><path d="M21.500 22.500 l5.500 5.500" stroke="#111" stroke-width="2.600" stroke-linecap="round"/></svg>
<svg class="abs" style="left:263px;top:71px" width="34" height="32" viewBox="0 0 34 32"><path d="M10 11 v-8.500 h20 v17 M18 28.500 h-15.500 v-17.500 h5" fill="none" stroke="#5b8fd0" stroke-width="1.900" stroke-linejoin="round"/><circle cx="17" cy="17" r="7.800" fill="none" stroke="#111" stroke-width="2.300"/><path d="M22.500 22.500 l5.500 5.500" stroke="#111" stroke-width="2.600" stroke-linecap="round"/></svg>
<svg class="abs" style="left:346px;top:73px" width="28" height="28" viewBox="0 0 28 28"><path d="M11 7 v-4.500 h6 v4.500 M1.500 7.500 h25 v5.500 h-25z M4.500 13 v11.500 h19 v-11.500" fill="none" stroke="#111" stroke-width="2.200" stroke-linejoin="round"/><path d="M9.500 23 v-4 M14 23 v-6.500 M18.500 23 v-5" stroke="#4a7fc8" stroke-width="1.800"/></svg>
<div class="ic" style="left:0;width:80px;top:109px">拉框查询</div>
<div class="ic" style="left:80px;width:80px;top:109px">画圆查询</div>
<div class="ic" style="left:160px;width:80px;top:109px">多边形查询</div>
<div class="ic" style="left:240px;width:80px;top:109px">拐点坐标查询</div>
<div class="ic" style="left:320px;width:80px;top:109px">清空查询</div>
<div class="abs" style="left:25px;top:142px;width:97px;height:38px;border:1px solid #1f9c96;background:#fff;text-align:center;line-height:36px;font-size:14px;color:#111">行政区划</div>
<div class="abs" style="left:147px;top:142px;width:95px;height:38px;background:#fff;border-radius:5px;text-align:center;line-height:38px;font-size:14px;color:#111">水文</div>
<div class="abs" style="left:267px;top:142px;width:95px;height:38px;background:#fff;border-radius:5px;text-align:center;line-height:38px;font-size:14px;color:#111">流域</div>
<div class="abs" style="left:15px;top:196px;width:374px;height:1px;background:#e8e8e8"></div>
<div class="lbl" style="left:0;width:106px;top:214px;line-height:16px">区县</div>
<div class="lbl" style="left:0;width:106px;top:249px;line-height:16px">地理位置</div>
<div class="lbl" style="left:0;width:106px;top:284px;line-height:16px">野外编号</div>
<div class="lbl" style="left:0;width:106px;top:319px;line-height:16px">监测点类别</div>
<div class="lbl" style="left:0;width:106px;top:354px;line-height:16px">含水介质</div>
<div class="lbl" style="left:0;width:106px;top:389px;line-height:16px">监测方式</div>
<div class="inp" style="top:207px;color:#333;letter-spacing:1px">--选择区--<i></i></div>
<div class="inp" style="top:242px"></div>
<div class="inp" style="top:277px"></div>
<div class="inp" style="top:312px">请选择<i></i></div>
<div class="inp" style="top:347px">请选择<i></i></div>
<div class="inp" style="top:382px">请选择<i></i></div>
<div class="abs" style="left:15px;top:425px;width:374px;height:1px;background:#e8e8e8"></div>
<div class="abs" style="left:15px;top:433px;font-size:14px;color:#222;line-height:17px;white-space:nowrap">已选条件</div>
<div class="abs" style="left:82px;top:715px;width:94px;height:38px;border:1px solid #3aa0f5;border-radius:2px;background:#fff;color:#3aa0f5;font-size:14px;line-height:39px;text-align:center">全部清除</div>
<div class="abs" style="left:262px;top:715px;width:92px;height:38px;border-radius:2px;background:#1e9fff;color:#fff;font-size:14px;line-height:41px;text-align:center">执行查询</div>
</div>
<svg class="abs" style="left:1562px;top:118px" width="340" height="48" viewBox="1562 118 340 48">
<path d="M1562 121 H1842 A47 47 0 0 0 1842 163.500 H1562Z" fill="#fff"/>
<circle cx="1871" cy="142" r="21.500" fill="#d9f0fc"/>
<circle cx="1871" cy="142" r="19.500" fill="#fff"/>
<g fill="none" stroke="#4a7fd0" stroke-width="1.800" stroke-linecap="round" stroke-linejoin="round">
<path d="M1587 142.300 A11.100 11.100 0 1 0 1591.300 133 M1588.600 130.300 v5.800 h6"/>
<path d="M1657.500 133.500 h18.500 v18 h-18.500z" stroke-dasharray="5 2.500" stroke-dashoffset="-2"/><path d="M1659 135 l15.500 15"/>
<path d="M1728.500 133.500 h17 v18 h-17z"/>
<path d="M1729 139 l5.500 -5.500 M1729 144.500 l11 -11 M1729 150 l16.500 -16.500 M1733.500 151 l11.500 -11.500 M1739 151 l6 -6" stroke-width="1.200"/>
<g transform="rotate(45 1807.500 141.700)"><path d="M1805.300 129 h4.400 v8.500 h-4.400z M1800.500 137.500 h14 v4 h-14z M1800.500 141.500 v8.500 h14 v-8.500 M1804 150 v-3 M1807.500 150 v-4 M1811 150 v-3" stroke-width="1.700"/></g>
<path d="M1876.200 148.800 l-7.400 -7.400 a4.800 4.800 0 0 1 -6 -6.300 l3 3 l2.600 -.7 l.7 -2.600 l-3 -3 a4.800 4.800 0 0 1 6.300 6 l7.400 7.400 a2.500 2.500 0 0 1 -3.600 3.600z" stroke="#4a8ada" stroke-width="1.700"/>
</g>
<circle cx="1598.100" cy="141.700" r="2.600" fill="#3f74c8"/>
<g fill="#fff" stroke="#4a7fd0" stroke-width="1.400"><circle cx="1657.500" cy="133.500" r="2.100"/><circle cx="1676" cy="133.500" r="2.100"/><circle cx="1657.500" cy="151.500" r="2.100"/><circle cx="1676" cy="151.500" r="2.100"/><rect x="1726.300" y="131.300" width="4.400" height="4.400"/><rect x="1743.300" y="131.300" width="4.400" height="4.400"/><rect x="1726.300" y="149.300" width="4.400" height="4.400"/><rect x="1743.300" y="149.300" width="4.400" height="4.400"/></g>
</svg>
<div class="abs" style="left:1412px;top:170px;width:420px;height:92px;border-radius:9px;background:rgba(222,225,243,.93)"></div>
<div class="abs" style="left:1427px;top:181px;width:395px;height:26px;background:#f3f4f8;border-radius:3px 3px 0 0"></div>
<div class="abs" style="left:1427px;top:207px;width:395px;height:45px;background:#f5f6fa;border-radius:0 0 8px 8px;border-top:1px solid #e4e6ee"></div>
<div class="abs" style="left:1427px;top:180px;width:72px;height:28px;background:#fbfcfe;border:1px solid #b9cdea;border-bottom:0;border-radius:4px 4px 0 0;color:#3c72c6;font-size:14px;line-height:27px;text-align:center;white-space:nowrap">监测方式</div>
<div class="abs" style="left:1503px;top:181px;color:#222;font-size:14px;line-height:26px;white-space:nowrap">监测点类别</div>
<svg class="abs" style="left:1443px;top:218px" width="22" height="22" viewBox="0 0 22 22"><circle cx="11" cy="11" r="10.500" fill="#2fc25b"/><circle cx="11" cy="11" r="5" fill="none" stroke="#fff" stroke-width="1.300"/><path d="M6.500 11.500 h9 M8 13.500 q3 2 6 0" stroke="#fff" stroke-width="1.100" fill="none"/></svg>
<div class="abs" style="left:1467px;top:218px;color:#666;font-size:14px;line-height:20px;white-space:nowrap">自动监测 <b style="font-size:15px;margin-left:-3px">2</b></div>
<svg class="abs" style="left:1628px;top:218px" width="22" height="22" viewBox="0 0 22 22"><circle cx="11" cy="11" r="10.500" fill="#0d47a1"/><path d="M11 5 c2.300 3 4.200 4.800 4.200 7.200 a4.200 4.200 0 0 1 -8.400 0 c0 -2.400 1.900 -4.200 4.200 -7.200z" fill="none" stroke="#fff" stroke-width="1.400"/><circle cx="11" cy="13" r="1.300" fill="#fff"/></svg>
<div class="abs" style="left:1652px;top:218px;color:#666;font-size:14px;line-height:20px;white-space:nowrap">人工监测 <b style="font-size:15px;margin-left:-3px">83</b></div>
<div class="abs" style="left:1847px;top:180px;width:45px;height:45px;background:#fff;border-radius:2px"></div>
<svg class="abs" style="left:1856px;top:186px" width="28" height="24" viewBox="0 0 28 24"><path d="M3 18.500 l8.500 -15 l6 10.500" fill="none" stroke="#3c72c6" stroke-width="1.700" stroke-linejoin="round"/><path d="M3 18.500 h10" stroke="#3c72c6" stroke-width="1.700"/><circle cx="19.500" cy="16" r="5" fill="#fff" stroke="#3c72c6" stroke-width="1.700"/></svg>
<div class="abs" style="left:1847px;top:212px;width:45px;text-align:center;font-size:9px;font-weight:700;color:#3c72c6;line-height:11px;white-space:nowrap">图例</div>
<div class="abs" style="left:1847px;top:230px;width:45px;height:45px;background:#fff;border-radius:2px"></div>
<svg class="abs" style="left:1856px;top:232px" width="28" height="30" viewBox="1856 232 28 30"><path d="M1860.200 235.500 c.9 1.200 1.600 2 1.600 2.900 a1.600 1.600 0 0 1 -3.200 0 c0 -.9 .7 -1.700 1.600 -2.900z M1865.800 239.800 c2 2.700 3.600 4.500 3.600 6.700 a3.600 3.600 0 0 1 -7.200 0 c0 -2.200 1.600 -4 3.600 -6.700z" fill="#2f6fc0"/><path d="M1874.600 235.300 v20.500 M1874.600 240.200 h3.800 M1874.600 246 h3.800 M1874.600 251.200 h3.800" stroke="#2f6fc0" stroke-width="2" fill="none"/><path d="M1858.500 258 q2.800 -3.200 5.600 0 t5.600 0 t5.600 0 t5.600 0" stroke="#2f6fc0" stroke-width="2" fill="none"/></svg>
<div class="abs" style="left:1844px;top:265px;width:51px;text-align:center;font-size:8.500px;font-weight:700;color:#2f6fc0;line-height:10px;white-space:nowrap;letter-spacing:-.3px">水位剖面图</div>
<div class="abs" id="popup" style="left:1115px;top:273px;width:376px;height:360px;background:#fff;box-shadow:0 1px 4px rgba(0,0,0,.3);border-radius:3px 3px 0 0">
<div class="abs" style="left:0;top:0;width:376px;height:26px;background:#2060c8;border-radius:3px 3px 0 0"></div>
<div class="abs" style="left:20px;top:0;color:#fff;font-size:20px;font-weight:700;line-height:28px;white-space:nowrap">莱州市市吕村</div>
<svg class="abs" style="left:355px;top:5px" width="16" height="16" viewBox="0 0 16 16"><path d="M2 2 l12 12 M14 2 l-12 12" stroke="#fff" stroke-width="2.600"/></svg>
<div class="abs" style="left:5px;top:30px;font-size:16px;color:#6a6a6a;line-height:26px;white-space:nowrap">统一编号: CQ15<br>野外编号: TC55（CQ15)<br>最新水温:<br>监测时间:<br>最新水位: 39.906<br>监测时间: 2023-12-30</div>
<div class="abs" style="left:19px;top:78px;width:156px;border-top:1px dashed #aaa"></div>
<div class="abs" style="left:19px;top:130px;width:156px;border-top:1px dashed #aaa"></div>
<div class="abs" style="left:19px;top:182px;width:156px;border-top:1px dashed #aaa"></div>
<svg class="abs" style="left:220px;top:26px" width="156" height="214" viewBox="1335 298.700 156 214">
<rect x="1335" y="297" width="156" height="216" fill="#eef4fc"/>
<rect x="1335" y="297" width="156" height="32" fill="#fde8cf"/>
<path d="M1335 329.600 H1491" stroke="#0c0c84" stroke-width="2" stroke-dasharray="2 2"/>
<rect x="1347" y="331.500" width="22" height="177.500" fill="#fff" stroke="#000" stroke-width="2.200"/>
<rect x="1350.500" y="332" width="15" height="76" fill="#eef4fc" stroke="#111" stroke-width="1"/>
<rect x="1347.700" y="408.500" width="20.600" height="99.500" fill="#3bbf12"/>
<path d="M1346 408.500 H1491" stroke="#1010e6" stroke-width="2"/>
<path d="M1351 395.500 h13 l-6.500 12z" fill="#1414e0"/>
<text x="1371.500" y="405.500" font-size="11" fill="#1a1ae0" font-family="Liberation Sans,Noto Sans CJK SC,sans-serif">实际水位39.906m</text>
<g id="tree"><ellipse cx="1344" cy="326.300" rx="3.500" ry="1" fill="#b9b08a"/><path d="M1344 313 v13 M1344 321 l-4 -3.500 M1344 320 l4 -3.500" stroke="#d0803c" stroke-width="1.900" fill="none"/><ellipse cx="1339.300" cy="317" rx="1.800" ry="2.400" fill="#1d9a62"/><ellipse cx="1348.800" cy="316.300" rx="1.800" ry="2.400" fill="#3ccf96"/><ellipse cx="1344" cy="308" rx="6" ry="7.800" fill="#14a064"/><ellipse cx="1345.500" cy="310" rx="4" ry="5.500" fill="#22b478" opacity=".7"/></g>
<use href="#tree" x="20"/><use href="#tree" x="117"/><use href="#tree" x="137"/>
</svg>
<div class="abs" style="left:0;top:246px;width:376px;height:1px;background:#e6e6e6"></div>
<div class="abs" style="left:5px;top:262px;width:152px;height:32px;background:#dcdce2;border:1px solid #6ba3ee;color:#4da3f2;font-size:20px;line-height:35px;text-align:center;white-space:nowrap">监测点基本信息</div>
<div class="abs" style="left:0;top:307px;width:376px;height:1px;background:#e6e6e6"></div>
<div class="abs" style="left:0;top:313px;width:96px;height:42px;border:1px solid #2f9e7a;color:#2f9e7a;font-size:20px;line-height:46px;text-align:center">水位</div>
<div class="abs" style="left:122px;top:313px;font-size:20px;line-height:48px;color:#111;white-space:nowrap">水质</div>
<div class="abs" style="left:216px;top:313px;font-size:20px;line-height:48px;color:#111;white-space:nowrap">水温</div>
<div class="abs" style="left:96px;top:355px;width:280px;height:1px;background:#e2e2e2"></div>
<svg class="abs" style="left:38px;top:360px" width="20" height="9" viewBox="0 0 20 9"><path d="M0 0 h20 l-10 9z" fill="#fff"/></svg>
</div>
<div class="abs" id="chart" style="left:1342px;top:636px;width:570px;height:330px;background:#fff;box-shadow:0 0 6px rgba(0,0,0,.3)">
<div class="abs" style="left:0;top:0;width:570px;height:43px;background:#f8f8f8;border-bottom:1px solid #eee"></div>
<div class="abs" style="left:20px;top:11px;font-size:14px;color:#333;line-height:20px;white-space:nowrap">分类统计图</div>
<svg class="abs" style="left:484px;top:12px" width="74" height="20" viewBox="0 0 74 20"><path d="M3 10.500 h14" stroke="#222" stroke-width="1.800"/><path d="M34.500 4.500 h-5 v11.500 h11.500 v-5 M36.500 3.500 h5.500 v5.500 M42 3.500 l-6.500 6.500 M29.500 11.500 h4.500 v4.500" fill="none" stroke="#333" stroke-width="1.200"/><path d="M57 5 l11 11 M68 5 l-11 11" stroke="#222" stroke-width="1.600"/></svg>
<div class="abs" style="left:0;top:43px;width:152px;height:287px;background:#393d49"></div>
<div class="abs" style="left:0;top:43px;width:152px;height:35px;background:#009688;color:#fff;font-size:14px;line-height:37px;padding-left:20px;white-space:nowrap">行政区划统计</div>
<div class="abs" style="left:0;top:78px;width:152px;height:35px;color:#c8c8c8;font-size:14px;line-height:37px;padding-left:20px;white-space:nowrap">地下水类型统计</div>
<svg class="abs" style="left:152px;top:43px" width="418" height="287" viewBox="1494 679 418 287" font-family="Liberation Sans,Noto Sans CJK SC,sans-serif">
<rect x="1644" y="684" width="25" height="13.500" rx="3.500" fill="#2fc25b"/><text x="1674.500" y="695" font-size="12" fill="#333">自动</text>
<rect x="1708" y="684" width="25" height="13.500" rx="3.500" fill="#5b8ff9"/><text x="1738.500" y="695" font-size="12" fill="#333">人工</text>
<path d="M1537 739.9 H1870" stroke="#ccc" stroke-width="1"/>
<rect x="1539.2" y="841.0" width="22" height="67.6" fill="#5b8ff9"/>
<rect x="1539.2" y="829.7" width="22" height="11.3" fill="#2fc25b"/>
<rect x="1567.0" y="795.9" width="22" height="112.7" fill="#5b8ff9"/>
<rect x="1594.7" y="739.6" width="22" height="169.0" fill="#5b8ff9"/>
<rect x="1622.5" y="795.9" width="22" height="112.7" fill="#5b8ff9"/>
<rect x="1650.2" y="852.3" width="22" height="56.3" fill="#5b8ff9"/>
<rect x="1650.2" y="841.0" width="22" height="11.3" fill="#2fc25b"/>
<rect x="1678.0" y="807.2" width="22" height="101.4" fill="#5b8ff9"/>
<rect x="1705.7" y="852.3" width="22" height="56.3" fill="#5b8ff9"/>
<rect x="1733.5" y="807.2" width="22" height="101.4" fill="#5b8ff9"/>
<rect x="1761.2" y="897.3" width="22" height="11.3" fill="#5b8ff9"/>
<rect x="1789.0" y="841.0" width="22" height="67.6" fill="#5b8ff9"/>
<rect x="1816.7" y="874.8" width="22" height="33.8" fill="#5b8ff9"/>
<rect x="1844.5" y="863.5" width="22" height="45.1" fill="#5b8ff9"/>
<path d="M1537.500 739.6 V913.6 M1532 908.9 H1870" stroke="#333" stroke-width="1" fill="none"/>
<path d="M1532 739.9 h5" stroke="#333" stroke-width="1"/>
<path d="M1565.2 908.6 v5 M1593.0 908.6 v5 M1620.8 908.6 v5 M1648.5 908.6 v5 M1676.2 908.6 v5 M1704.0 908.6 v5 M1731.8 908.6 v5 M1759.5 908.6 v5 M1787.2 908.6 v5 M1815.0 908.6 v5 M1842.8 908.6 v5 M1870.5 908.6 v5 " stroke="#333" stroke-width="1"/>
<text x="1529" y="744.1" font-size="12" fill="#444" text-anchor="end">15</text>
<text x="1529" y="913.1" font-size="12" fill="#444" text-anchor="end">0</text>
<text transform="translate(1548.4 918.1) rotate(45)" font-size="12" fill="#444">芝罘区</text>
<text transform="translate(1576.1 918.1) rotate(45)" font-size="12" fill="#444">福山区</text>
<text transform="translate(1603.9 918.1) rotate(45)" font-size="12" fill="#444">牟平区</text>
<text transform="translate(1631.6 918.1) rotate(45)" font-size="12" fill="#444">莱山区</text>
<text transform="translate(1659.4 918.1) rotate(45)" font-size="12" fill="#444">开发区</text>
<text transform="translate(1687.1 918.1) rotate(45)" font-size="12" fill="#444">龙口市</text>
<text transform="translate(1714.9 918.1) rotate(45)" font-size="12" fill="#444">莱阳市</text>
<text transform="translate(1742.6 918.1) rotate(45)" font-size="12" fill="#444">莱州市</text>
<text transform="translate(1770.4 918.1) rotate(45)" font-size="12" fill="#444">蓬莱市</text>
<text transform="translate(1798.1 918.1) rotate(45)" font-size="12" fill="#444">招远市</text>
<text transform="translate(1825.9 918.1) rotate(45)" font-size="12" fill="#444">栖霞市</text>
<text transform="translate(1853.6 918.1) rotate(45)" font-size="12" fill="#444">海阳市</text>
</svg>
</div>
<div class="abs" style="left:0;top:958px;width:8px;height:8px;background:radial-gradient(circle at 8px 0,transparent 7.500px,#fff 8.500px)"></div><div class="abs" style="left:1905px;top:0;width:7px;height:7px;background:radial-gradient(circle at 0 7px,transparent 6.500px,#fff 7.500px)"></div><div class="abs" style="left:0;top:0;width:7px;height:7px;background:radial-gradient(circle at 7px 7px,transparent 6.500px,#fff 7.500px)"></div></body></html>
